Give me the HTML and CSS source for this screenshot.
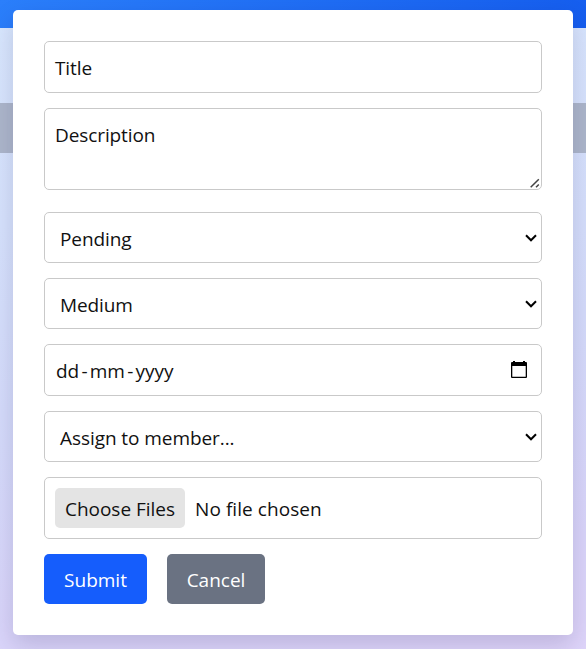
FILE: index.html
```html
<!DOCTYPE html>
<html lang="en">
<head>
<meta charset="utf-8">
<title>Task form</title>
<link rel="stylesheet" href="styles.css">
</head>
<body>
<div class="page">
  <div class="topbar"></div>
  <div class="toolbar"></div>
</div>
<form class="modal">
  <div class="field"><span class="t-title">Title</span></div>
  <div class="field area"><span class="t-description">Description</span>
    <svg class="grip" width="10" height="10" viewBox="0 0 10 10" fill="none" stroke="#444" stroke-width="1.5"><path d="M.7 9.3 8.8 1.2M6 9.3l2.8-2.8"/></svg>
  </div>
  <div class="field select"><span class="t-pending">Pending</span>
    <svg class="chevron" width="12" height="8" viewBox="0 0 12 8" fill="none" stroke="#000" stroke-width="2"><path d="m1 1.3 5 5 5-5"/></svg></div>
  <div class="field select"><span class="t-medium">Medium</span>
    <svg class="chevron" width="12" height="8" viewBox="0 0 12 8" fill="none" stroke="#000" stroke-width="2"><path d="m1 1.3 5 5 5-5"/></svg></div>
  <div class="field date"><span class="t-date">dd<span class="dash">-</span>mm<span class="dash">-</span>yyyy</span>
    <svg class="calendar" width="16" height="17" viewBox="0 0 16 17"><path fill="#000" fill-rule="evenodd" d="M2 0h2v1h8V0h2v1h1q1 0 1 1v14q0 1-1 1H1q-1 0-1-1V2q0-1 1-1h1zM1.3 5v10.7h13.4V5z"/></svg></div>
  <div class="field select"><span class="t-assign">Assign to member...</span>
    <svg class="chevron" width="12" height="8" viewBox="0 0 12 8" fill="none" stroke="#000" stroke-width="2"><path d="m1 1.3 5 5 5-5"/></svg></div>
  <div class="field file"><span class="choose"><span class="t-choose">Choose Files</span></span><span class="t-nofile">No file chosen</span></div>
  <div class="actions">
    <button type="button" class="btn submit"><span class="t-submit">Submit</span></button>
    <button type="button" class="btn cancel"><span class="t-cancel">Cancel</span></button>
  </div>
</form>
</body>
</html>
```
FILE: styles.css
```css
* { box-sizing: border-box; }
html, body { height: 100%; }
body {
  margin: 0;
  padding: 10px 13px 14px;
  overflow: hidden;
  font: 19px/28px "Segoe UI", "Open Sans", "Noto Sans", sans-serif;
  color: #111;
}
.page {
  position: absolute;
  inset: 0;
  z-index: -1;
  background: linear-gradient(170deg, #d9e8fe 0%, #d7e3fd 30%, #d5dcfb 55%, #dad5fa 85%, #dfd5fa 100%);
}
.topbar { height: 28px; background: linear-gradient(135deg, #2b7ffb, #155dee); }
.toolbar { height: 50px; margin-top: 75px; background: #adb7cb; }
.modal {
  height: 625px;
  padding: 31px;
  border-radius: 5px;
  background: #fff;
  box-shadow: 0 10px 24px rgba(30, 20, 80, .17);
}
.field {
  position: relative;
  display: flex;
  align-items: center;
  height: 52px;
  margin-bottom: 15px;
  padding: 2px 10px 0;
  border: 1px solid #c9c9c9;
  border-radius: 5px;
  white-space: nowrap;
}
.area { height: 82px; margin-bottom: 22px; align-items: flex-start; padding-top: 12px; }
.select { height: 51px; padding: 2px 4px 0 15px; justify-content: space-between; }
.date { padding: 2px 14px 0 11px; justify-content: space-between; }
.dash { margin: 0 2.2px; }
.file { height: 62px; gap: 10px; padding-top: 0; }
.grip { position: absolute; right: 1px; bottom: 1px; }
.chevron { margin-top: -2px; }
.calendar { margin-top: -3px; }
.choose {
  display: flex;
  align-items: center;
  width: 130px;
  height: 40px;
  padding: 2px 10px 0;
  border-radius: 5px;
  background: #e4e4e4;
}
.t-nofile { margin-top: 2px; letter-spacing: .07px; }
.actions { display: flex; gap: 20px; }
.btn {
  display: flex;
  align-items: center;
  justify-content: center;
  height: 50px;
  padding: 2px 0 0;
  border: 0;
  border-radius: 5px;
  color: #fff;
  font: inherit;
}
.submit { width: 103px; background: #155dfc; }
.cancel { width: 98px; background: #6a7282; }
.t-title, .t-description, .t-pending, .t-medium { letter-spacing: -.1px; }
.t-assign { letter-spacing: -.07px; }
.t-choose { letter-spacing: -.03px; }
```
